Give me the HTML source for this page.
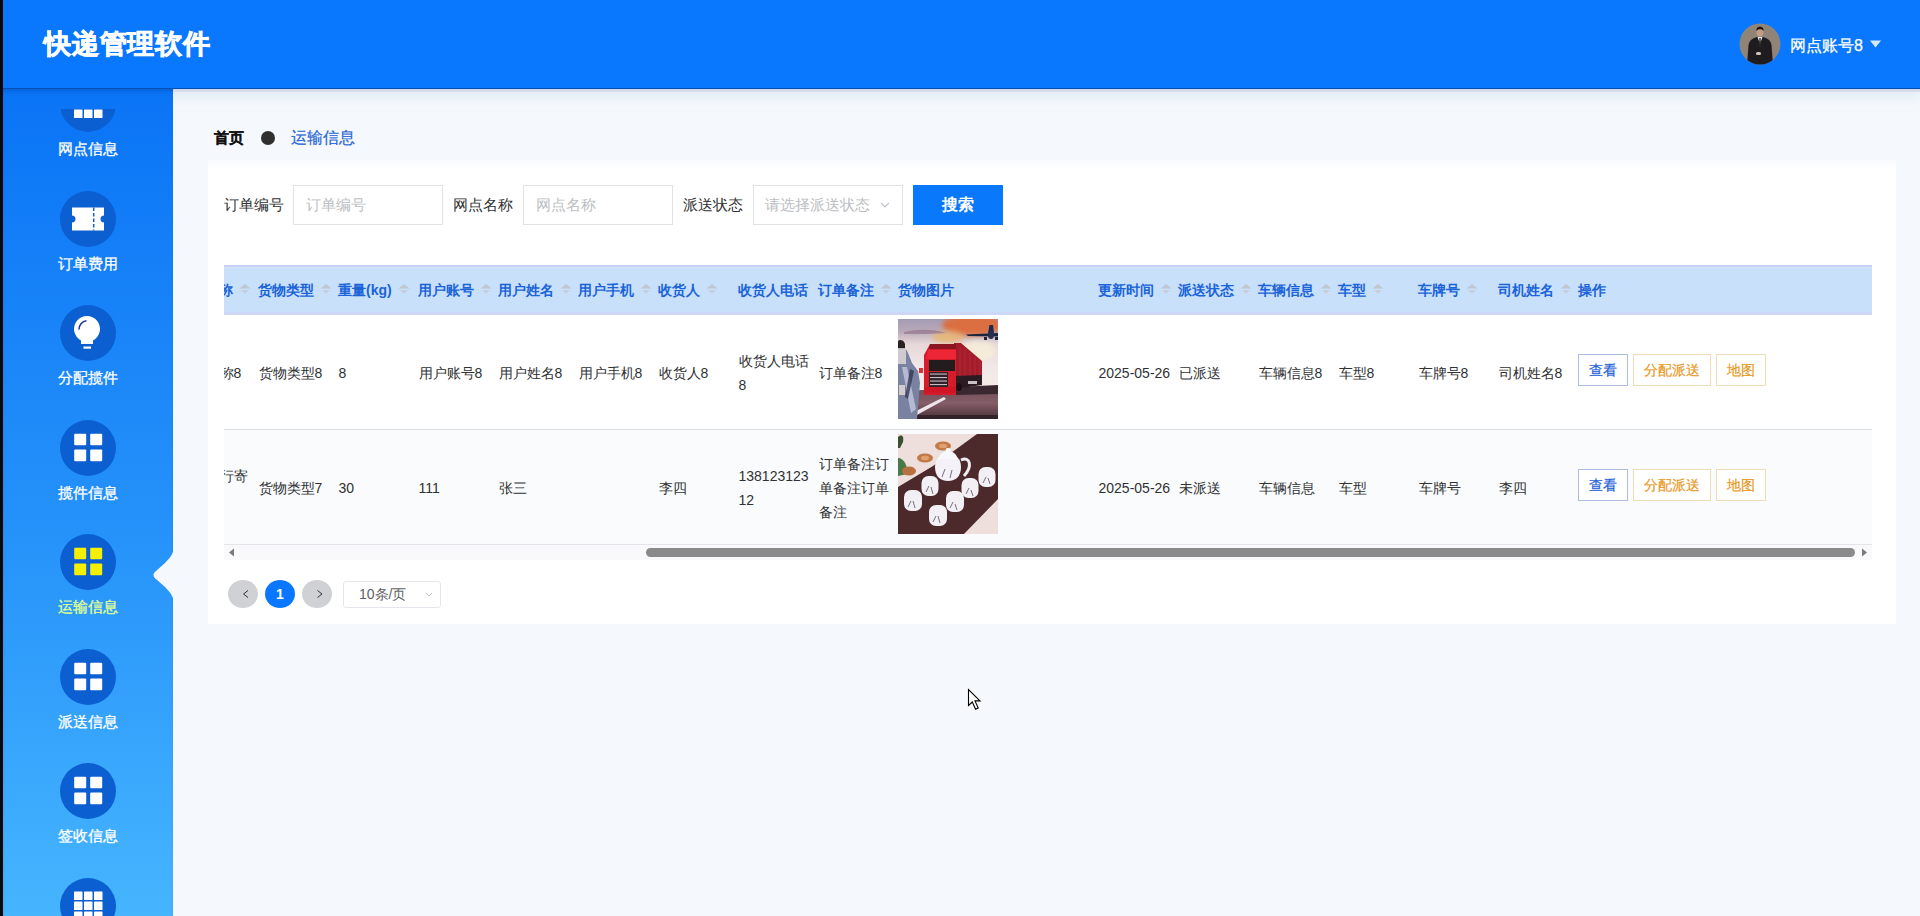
<!DOCTYPE html>
<html><head><meta charset="utf-8">
<style>
*{box-sizing:border-box;margin:0;padding:0}
html,body{width:1920px;height:916px;overflow:hidden}
body{position:relative;background:#f5f8fd;font-family:"Liberation Sans",sans-serif;color:#303133;font-size:14px}
.abs{position:absolute;white-space:nowrap}
#strip{position:absolute;left:0;top:0;width:3px;height:916px;background:#020a0c;z-index:20}
#header{position:absolute;left:0;top:0;width:1920px;height:89px;background:#0a78fe;z-index:10;border-bottom:1px solid #0b4fae;box-shadow:0 1px 0 #c8daf4,0 3px 0 #d6dde8,0 4px 0 #f0ebf6,0 8px 10px rgba(200,230,235,.5)}
#title{left:44px;top:26.5px;font-size:27px;letter-spacing:0.8px;font-weight:bold;color:#fff;line-height:34px;-webkit-text-stroke:0.7px #fff}
#sidebar{position:absolute;z-index:11;left:3px;top:89px;width:170px;height:827px;box-shadow:inset 0 4px 4px -2px rgba(0,60,160,.35);background:linear-gradient(180deg,#0a74f6 0%,#2693fa 55%,#46b5fe 100%);overflow:hidden}
.item{position:absolute;left:0;width:170px;height:114px}
.circ{position:absolute;left:57px;width:56px;height:56px;border-radius:50%;background:#0c5fd0}
.lab{position:absolute;left:0;width:170px;text-align:center;color:#fff;font-size:15px;font-weight:400;line-height:16px;-webkit-text-stroke:0.3px currentColor}
#card{position:absolute;left:208px;top:159px;width:1688px;height:465px;background:linear-gradient(180deg,#f7fafd 0px,#fdfeff 8px,#fff 14px)}
.lbl{font-size:15px;color:#303133;line-height:16px}
.inp{position:absolute;height:40px;border:1px solid #e0e2e6;background:#fff}
.ph{font-size:15px;color:#bcbec2;line-height:16px}
.th{font-size:14px;font-weight:bold;color:#1b64d8;line-height:16px}
.td{font-size:14px;color:#303133;line-height:16px}
.btn{position:absolute;height:32px;border:1px solid;font-size:14px;line-height:30px;text-align:center;-webkit-text-stroke:0.2px currentColor}
</style></head><body>
<div id="strip"></div>
<div id="header">
  <div class="abs" id="title">快递管理软件</div><svg class="abs" style="left:1739px;top:23px" width="42" height="42" viewBox="0 0 42 42">
<defs><clipPath id="avc"><circle cx="21" cy="21" r="20.5"/></clipPath></defs>
<g clip-path="url(#avc)">
<rect width="42" height="42" fill="#908478"/>
<path d="M8 42 L9.5 22 C10.5 17 14 15 18 14 L24 14 C28 15 31.5 17 32.5 22 L34 42Z" fill="#1e1c1e"/>
<path d="M18.5 14 L21 21 L23.5 14Z" fill="#e6e2de"/>
<path d="M20.4 15 L21.6 15 L22 23 L21 25 L20 23Z" fill="#2a2a2a"/>
<ellipse cx="21" cy="9" rx="3.6" ry="4.6" fill="#c49c84"/>
<path d="M17.4 8 C17.5 4.5 19 3.8 21 3.8 C23 3.8 24.5 4.5 24.6 8 C23.5 6.5 22 6.2 21 6.2 C20 6.2 18.5 6.5 17.4 8Z" fill="#1a1410"/>
<rect x="17" y="29" width="5" height="3" rx="1.5" fill="#d8c0b0"/>
</g></svg><div class="abs" style="left:1790px;top:35.5px;font-size:16px;line-height:20px;color:#fff;-webkit-text-stroke:0.25px #fff">网点账号8</div><svg class="abs" style="left:1870px;top:40px" width="11" height="8"><path d="M0 0.5h11L5.5 7.5z" fill="#d5e9ff"/></svg>
</div>
<div id="sidebar"><div id="sbclip" style="position:absolute;left:0;top:20px;width:170px;height:807px;overflow:hidden"><div class="circ" style="top:-33.5px"><svg width="56" height="56" style="position:absolute;left:0;top:0"><g fill="#fff"><rect x="14" y="13.5" width="8.5" height="8.5" rx="0.5"/><rect x="24" y="13.5" width="8.5" height="8.5" rx="0.5"/><rect x="34" y="13.5" width="8.5" height="8.5" rx="0.5"/><rect x="14" y="23.5" width="8.5" height="8.5" rx="0.5"/><rect x="24" y="23.5" width="8.5" height="8.5" rx="0.5"/><rect x="34" y="23.5" width="8.5" height="8.5" rx="0.5"/><rect x="14" y="33.5" width="8.5" height="8.5" rx="0.5"/><rect x="24" y="33.5" width="8.5" height="8.5" rx="0.5"/><rect x="34" y="33.5" width="8.5" height="8.5" rx="0.5"/></g></svg></div><div class="lab" style="top:31.5px;color:#fff">网点信息</div><div class="circ" style="top:81.5px"><svg width="56" height="56" style="position:absolute;left:0;top:0"><path fill="#fff" d="M12 16.5h32v8a3.5 3.5 0 0 0 0 7v8h-32v-8a3.5 3.5 0 0 0 0-7z"/><path stroke="#0c5fd0" stroke-width="1.5" stroke-dasharray="3.5 2" d="M33.7 16.5v23"/></svg></div><div class="lab" style="top:146.5px;color:#fff">订单费用</div><div class="circ" style="top:196.0px"><svg width="56" height="56" style="position:absolute;left:0;top:0"><path fill="#fff" d="M21 35.5A13 13 0 1 1 33 35.5L33 39L21 39Z"/><rect x="23.5" y="41.5" width="7.5" height="2.2" fill="#fff"/><path d="M19 24.5A8.5 8.5 0 0 1 26.5 15.8" fill="none" stroke="#1838a8" stroke-width="1.6"/></svg></div><div class="lab" style="top:261.0px;color:#fff">分配揽件</div><div class="circ" style="top:310.5px"><svg width="56" height="56" style="position:absolute;left:0;top:0"><g fill="#fff"><rect x="14.2" y="13.7" width="12" height="11.6" rx="1"/><rect x="30.2" y="13.7" width="12" height="11.6" rx="1"/><rect x="14.2" y="29.6" width="12" height="11.6" rx="1"/><rect x="30.2" y="29.6" width="12" height="11.6" rx="1"/></g></svg></div><div class="lab" style="top:375.5px;color:#fff">揽件信息</div><div class="circ" style="top:425.0px"><svg width="56" height="56" style="position:absolute;left:0;top:0"><g fill="#f5f000"><rect x="14.2" y="13.7" width="12" height="11.6" rx="1"/><rect x="30.2" y="13.7" width="12" height="11.6" rx="1"/><rect x="14.2" y="29.6" width="12" height="11.6" rx="1"/><rect x="30.2" y="29.6" width="12" height="11.6" rx="1"/></g></svg></div><div class="lab" style="top:490.0px;color:#e0ff90">运输信息</div><div class="circ" style="top:539.5px"><svg width="56" height="56" style="position:absolute;left:0;top:0"><g fill="#fff"><rect x="14.2" y="13.7" width="12" height="11.6" rx="1"/><rect x="30.2" y="13.7" width="12" height="11.6" rx="1"/><rect x="14.2" y="29.6" width="12" height="11.6" rx="1"/><rect x="30.2" y="29.6" width="12" height="11.6" rx="1"/></g></svg></div><div class="lab" style="top:604.5px;color:#fff">派送信息</div><div class="circ" style="top:654.0px"><svg width="56" height="56" style="position:absolute;left:0;top:0"><g fill="#fff"><rect x="14.2" y="13.7" width="12" height="11.6" rx="1"/><rect x="30.2" y="13.7" width="12" height="11.6" rx="1"/><rect x="14.2" y="29.6" width="12" height="11.6" rx="1"/><rect x="30.2" y="29.6" width="12" height="11.6" rx="1"/></g></svg></div><div class="lab" style="top:719.0px;color:#fff">签收信息</div><div class="circ" style="top:768.5px"><svg width="56" height="56" style="position:absolute;left:0;top:0"><g fill="#fff"><rect x="14" y="13.5" width="8.5" height="8.5" rx="0.5"/><rect x="24" y="13.5" width="8.5" height="8.5" rx="0.5"/><rect x="34" y="13.5" width="8.5" height="8.5" rx="0.5"/><rect x="14" y="23.5" width="8.5" height="8.5" rx="0.5"/><rect x="24" y="23.5" width="8.5" height="8.5" rx="0.5"/><rect x="34" y="23.5" width="8.5" height="8.5" rx="0.5"/><rect x="14" y="33.5" width="8.5" height="8.5" rx="0.5"/><rect x="24" y="33.5" width="8.5" height="8.5" rx="0.5"/><rect x="34" y="33.5" width="8.5" height="8.5" rx="0.5"/></g></svg></div></div></div><svg class="abs" style="left:150px;top:547px;z-index:12" width="24" height="56" viewBox="0 0 24 56"><path fill="#f5f8fd" d="M24 0 C23.5 6 21 10 15 16 L6.5 23.5 C2.5 26.5 2.5 29.5 6.5 32.5 L15 40 C21 46 23.5 50 24 56 Z"/></svg>
<div id="main"><div class="abs" style="left:214px;top:128.5px;font-size:15px;font-weight:bold;line-height:18px;color:#111;-webkit-text-stroke:0.2px #111">首页</div><div class="abs" style="left:261px;top:131px;width:14px;height:14px;border-radius:50%;background:#303030"></div><div class="abs" style="left:290.5px;top:128px;font-size:15.5px;line-height:20px;color:#2866d4;-webkit-text-stroke:0.2px #2866d4">运输信息</div><div id="card"></div><div class="abs lbl" style="left:224px;top:197px">订单编号</div><div class="inp" style="left:293px;top:185px;width:150px"></div><div class="abs ph" style="left:306px;top:197px">订单编号</div><div class="abs lbl" style="left:453px;top:197px">网点名称</div><div class="inp" style="left:523px;top:185px;width:150px"></div><div class="abs ph" style="left:536px;top:197px">网点名称</div><div class="abs lbl" style="left:683px;top:197px">派送状态</div><div class="inp" style="left:753px;top:185px;width:150px"></div><div class="abs ph" style="left:764.5px;top:197px">请选择派送状态</div><svg class="abs" style="left:880px;top:201px" width="10" height="8"><path d="M1 2l4 4 4-4" fill="none" stroke="#c0c4cc" stroke-width="1.2"/></svg><div class="abs" style="left:913px;top:185px;width:90px;height:40px;background:#0a78fa;color:#fff;font-size:16px;font-weight:bold;line-height:39px;text-align:center">搜索</div><div class="abs" style="left:224px;top:265px;width:1648px;height:50px;background:#c8e0fa;border-top:2px solid #c6d2f4;border-bottom:3px solid #ccd8f6;box-shadow:inset 0 1px 0 #d6e2fa"></div><div class="abs" style="left:224px;top:430px;width:1648px;height:114px;background:#fafbfd"></div><div class="abs" style="left:224px;top:429px;width:1648px;height:1px;background:#dfe0e2"></div><div class="abs" style="left:224px;top:544px;width:1648px;height:1px;background:#e4e5e8"></div><div class="abs" style="left:224px;top:545px;width:1648px;height:15px;background:#f9f9fb"></div><svg class="abs" style="left:228px;top:548px" width="8" height="9"><path d="M6 0.5v8L1 4.5z" fill="#7a7a7a"/></svg><svg class="abs" style="left:1860px;top:548px" width="8" height="9"><path d="M2 0.5v8L7 4.5z" fill="#7a7a7a"/></svg><div class="abs" style="left:646px;top:548px;width:1209px;height:9px;border-radius:5px;background:#8a8a8a"></div><div class="abs" style="left:224px;top:265px;width:1648px;height:280px;overflow:hidden"><div class="abs th" style="left:-5px;top:17px">称</div><div class="abs th" style="left:34px;top:17px">货物类型</div><div class="abs th" style="left:114px;top:17px">重量(kg)</div><div class="abs th" style="left:194px;top:17px">用户账号</div><div class="abs th" style="left:274px;top:17px">用户姓名</div><div class="abs th" style="left:354px;top:17px">用户手机</div><div class="abs th" style="left:434px;top:17px">收货人</div><div class="abs th" style="left:514px;top:17px">收货人电话</div><div class="abs th" style="left:594px;top:17px">订单备注</div><div class="abs th" style="left:674px;top:17px">货物图片</div><div class="abs th" style="left:874px;top:17px">更新时间</div><div class="abs th" style="left:954px;top:17px">派送状态</div><div class="abs th" style="left:1034px;top:17px">车辆信息</div><div class="abs th" style="left:1114px;top:17px">车型</div><div class="abs th" style="left:1194px;top:17px">车牌号</div><div class="abs th" style="left:1274px;top:17px">司机姓名</div><div class="abs th" style="left:1354px;top:17px">操作</div><svg class="abs" style="left:15px;top:18px" width="12" height="12"><path d="M0.5 5.5L6 1 11.5 5.5z" fill="#bec6d2"/><path d="M2 7.2L6 10.5 10 7.2z" fill="#c6cdd8"/></svg><svg class="abs" style="left:96px;top:18px" width="12" height="12"><path d="M0.5 5.5L6 1 11.5 5.5z" fill="#bec6d2"/><path d="M2 7.2L6 10.5 10 7.2z" fill="#c6cdd8"/></svg><svg class="abs" style="left:174px;top:18px" width="12" height="12"><path d="M0.5 5.5L6 1 11.5 5.5z" fill="#bec6d2"/><path d="M2 7.2L6 10.5 10 7.2z" fill="#c6cdd8"/></svg><svg class="abs" style="left:256px;top:18px" width="12" height="12"><path d="M0.5 5.5L6 1 11.5 5.5z" fill="#bec6d2"/><path d="M2 7.2L6 10.5 10 7.2z" fill="#c6cdd8"/></svg><svg class="abs" style="left:336px;top:18px" width="12" height="12"><path d="M0.5 5.5L6 1 11.5 5.5z" fill="#bec6d2"/><path d="M2 7.2L6 10.5 10 7.2z" fill="#c6cdd8"/></svg><svg class="abs" style="left:416px;top:18px" width="12" height="12"><path d="M0.5 5.5L6 1 11.5 5.5z" fill="#bec6d2"/><path d="M2 7.2L6 10.5 10 7.2z" fill="#c6cdd8"/></svg><svg class="abs" style="left:482px;top:18px" width="12" height="12"><path d="M0.5 5.5L6 1 11.5 5.5z" fill="#bec6d2"/><path d="M2 7.2L6 10.5 10 7.2z" fill="#c6cdd8"/></svg><svg class="abs" style="left:656px;top:18px" width="12" height="12"><path d="M0.5 5.5L6 1 11.5 5.5z" fill="#bec6d2"/><path d="M2 7.2L6 10.5 10 7.2z" fill="#c6cdd8"/></svg><svg class="abs" style="left:936px;top:18px" width="12" height="12"><path d="M0.5 5.5L6 1 11.5 5.5z" fill="#bec6d2"/><path d="M2 7.2L6 10.5 10 7.2z" fill="#c6cdd8"/></svg><svg class="abs" style="left:1016px;top:18px" width="12" height="12"><path d="M0.5 5.5L6 1 11.5 5.5z" fill="#bec6d2"/><path d="M2 7.2L6 10.5 10 7.2z" fill="#c6cdd8"/></svg><svg class="abs" style="left:1096px;top:18px" width="12" height="12"><path d="M0.5 5.5L6 1 11.5 5.5z" fill="#bec6d2"/><path d="M2 7.2L6 10.5 10 7.2z" fill="#c6cdd8"/></svg><svg class="abs" style="left:1148px;top:18px" width="12" height="12"><path d="M0.5 5.5L6 1 11.5 5.5z" fill="#bec6d2"/><path d="M2 7.2L6 10.5 10 7.2z" fill="#c6cdd8"/></svg><svg class="abs" style="left:1242px;top:18px" width="12" height="12"><path d="M0.5 5.5L6 1 11.5 5.5z" fill="#bec6d2"/><path d="M2 7.2L6 10.5 10 7.2z" fill="#c6cdd8"/></svg><svg class="abs" style="left:1336px;top:18px" width="12" height="12"><path d="M0.5 5.5L6 1 11.5 5.5z" fill="#bec6d2"/><path d="M2 7.2L6 10.5 10 7.2z" fill="#c6cdd8"/></svg><div class="abs td" style="left:-4.5px;top:100px">称8</div><div class="abs td" style="left:34.5px;top:100px">货物类型8</div><div class="abs td" style="left:114.5px;top:100px">8</div><div class="abs td" style="left:194.5px;top:100px">用户账号8</div><div class="abs td" style="left:274.5px;top:100px">用户姓名8</div><div class="abs td" style="left:354.5px;top:100px">用户手机8</div><div class="abs td" style="left:434.5px;top:100px">收货人8</div><div class="abs td" style="left:514.5px;top:88px">收货人电话</div><div class="abs td" style="left:514.5px;top:112px">8</div><div class="abs td" style="left:594.5px;top:100px">订单备注8</div><div class="abs td" style="left:874.5px;top:100px">2025-05-26</div><div class="abs td" style="left:954.5px;top:100px">已派送</div><div class="abs td" style="left:1034.5px;top:100px">车辆信息8</div><div class="abs td" style="left:1114.5px;top:100px">车型8</div><div class="abs td" style="left:1194.5px;top:100px">车牌号8</div><div class="abs td" style="left:1274.5px;top:100px">司机姓名8</div><div class="abs td" style="left:-4.5px;top:203px">行寄</div><div class="abs td" style="left:34.5px;top:215px">货物类型7</div><div class="abs td" style="left:114.5px;top:215px">30</div><div class="abs td" style="left:194.5px;top:215px">111</div><div class="abs td" style="left:274.5px;top:215px">张三</div><div class="abs td" style="left:434.5px;top:215px">李四</div><div class="abs td" style="left:514.5px;top:203px">138123123</div><div class="abs td" style="left:514.5px;top:227px">12</div><div class="abs td" style="left:594.5px;top:191px">订单备注订</div><div class="abs td" style="left:594.5px;top:215px">单备注订单</div><div class="abs td" style="left:594.5px;top:239px">备注</div><div class="abs td" style="left:874.5px;top:215px">2025-05-26</div><div class="abs td" style="left:954.5px;top:215px">未派送</div><div class="abs td" style="left:1034.5px;top:215px">车辆信息</div><div class="abs td" style="left:1114.5px;top:215px">车型</div><div class="abs td" style="left:1194.5px;top:215px">车牌号</div><div class="abs td" style="left:1274.5px;top:215px">李四</div><div class="btn" style="left:1354px;top:89px;width:50px;color:#1e62d6;border-color:#aebce0;background:#fff">查看</div><div class="btn" style="left:1409px;top:89px;width:78px;color:#e8981e;border-color:#f0dcb8;background:#fff">分配派送</div><div class="btn" style="left:1492px;top:89px;width:50px;color:#e8981e;border-color:#f0dcb8;background:#fff">地图</div><div class="btn" style="left:1354px;top:204px;width:50px;color:#1e62d6;border-color:#aebce0;background:#fff">查看</div><div class="btn" style="left:1409px;top:204px;width:78px;color:#e8981e;border-color:#f0dcb8;background:#fff">分配派送</div><div class="btn" style="left:1492px;top:204px;width:50px;color:#e8981e;border-color:#f0dcb8;background:#fff">地图</div><div class="abs" id="img1" style="left:674px;top:54px;width:100px;height:100px;overflow:hidden"><svg width="100" height="100" viewBox="0 0 100 100" style="position:absolute;left:0;top:0;display:block">
<defs>
<linearGradient id="sky" x1="0" y1="0" x2="0" y2="1"><stop offset="0" stop-color="#a49cb4"/><stop offset="0.12" stop-color="#b8a8b8"/><stop offset="0.25" stop-color="#e6d8d8"/><stop offset="0.5" stop-color="#f2e8ea"/><stop offset="0.7" stop-color="#f4ece8"/></linearGradient>
<linearGradient id="road" x1="0" y1="0" x2="0" y2="1"><stop offset="0" stop-color="#6e4c56"/><stop offset="0.5" stop-color="#845e68"/><stop offset="1" stop-color="#4a3038"/></linearGradient>
<filter id="bl" x="-30%" y="-30%" width="160%" height="160%"><feGaussianBlur stdDeviation="2.5"/></filter>
<filter id="bl2" x="-30%" y="-30%" width="160%" height="160%"><feGaussianBlur stdDeviation="0.6"/></filter>
</defs>
<rect width="100" height="100" fill="url(#sky)"/>
<ellipse cx="74" cy="6" rx="30" ry="11" fill="#e06a34" opacity="0.9" filter="url(#bl)"/>
<ellipse cx="50" cy="18" rx="16" ry="6" fill="#ecb46c" opacity="0.8" filter="url(#bl)"/>
<ellipse cx="80" cy="32" rx="18" ry="10" fill="#f6eed8" opacity="0.9" filter="url(#bl)"/>
<path d="M6 13 C20 10 36 10 48 14 C36 15 20 15 6 15Z" fill="#8c6c84" opacity="0.6" filter="url(#bl2)"/>
<path d="M0 72 L100 68 L100 100 L0 100Z" fill="url(#road)"/>
<path d="M58 68 L100 66 L100 75 L58 76Z" fill="#3a2830"/>
<path d="M14 94 L46 78 L48 80 L17 97Z" fill="#eee4ea"/>
<rect x="0" y="96" width="100" height="4" fill="#34222a"/>
<g filter="url(#bl2)">
<path d="M56 24 L63 24 L84 42 L84 57 L56 62Z" fill="#a41c2c"/>
<path d="M62 28 L62 60 M67 30 L67 59 M72 34 L72 58 M77 38 L77 58 M82 41 L82 57" stroke="#c03848" stroke-width="0.8" opacity="0.6"/>
<path d="M56 57 L84 56 L84 66 L56 70Z" fill="#2a1a20"/>
<rect x="70" y="62" width="9" height="3" fill="#e8e0e4" opacity="0.85"/>
<ellipse cx="61" cy="68" rx="3" ry="4" fill="#1a1014"/>
<path d="M32 25 L58 25 L58 76 L26 76 L26 36Z" fill="#d41a2a"/>
<path d="M32 25 L58 25 L58 30 L31 30Z" fill="#8a1420"/>
<path d="M30 31 L58 31 L58 40 L28 40Z" fill="#ec2834"/>
<path d="M31 41 L57 41 L57 52 L31 52Z" fill="#221a1e"/>
<path d="M31 53 L50 53 L50 69 L31 69Z" fill="#2e2228"/>
<rect x="32" y="54.5" width="17" height="1.1" fill="#c8bcc4"/><rect x="32" y="58" width="17" height="1.1" fill="#c8bcc4"/><rect x="32" y="61.5" width="17" height="1.1" fill="#c8bcc4"/><rect x="32" y="65" width="17" height="1.1" fill="#c8bcc4"/>
<path d="M26 68 L58 68 L58 74 L26 74Z" fill="#d01828"/>
<path d="M0 30 C3 26 8 28 10 34 L14 44 L20 52 L22 64 L19 100 L0 100Z" fill="#7a82a2"/>
<path d="M4 48 L9 48 L18 90 L13 94Z" fill="#c8cce0" opacity="0.75"/>
<path d="M12 50 L16 52 L10 80 L7 78Z" fill="#2a2e4a" opacity="0.7"/>
<rect x="1" y="66" width="6" height="10" fill="#e8e0d8" opacity="0.8"/>
<path d="M0 22 C2 20 6 21 7 25 L7 30 L0 30Z" fill="#2a2022"/>
<rect x="0" y="29" width="8" height="16" fill="#e4dcdc" opacity="0.8"/>
<path d="M21 49 L25 49 L25 54 L21 54Z" fill="#d83030"/>
</g>
<path d="M68 15.5 L100 14 L100 17.5 L70 17Z" fill="#1c2440"/>
<path d="M90 14 L91.5 6 L95 6 L96 14Z" fill="#1e2a48"/>
<ellipse cx="93" cy="16" rx="3" ry="4" fill="#26304e"/>
<rect x="86" y="18" width="3" height="3" fill="#1c2440"/><rect x="97" y="18" width="3" height="3" fill="#1c2440"/>
</svg></div><div class="abs" id="img2" style="left:674px;top:169px;width:100px;height:100px;overflow:hidden"><svg width="100" height="100" viewBox="0 0 100 100" style="position:absolute;left:0;top:0;display:block">
<rect width="100" height="100" fill="#eedfdc"/>
<path d="M0 53 L35 32 L79 0 L100 0 L100 65 L66 100 L0 100Z" fill="#4c2a2c"/>
<path d="M0 3 C4 0 6 2 5 8 L2 14 L0 14Z" fill="#3a5030"/>
<path d="M0 24 C6 24 10 32 9 40 L0 42Z" fill="#4a7a48"/>
<ellipse cx="45" cy="12" rx="8" ry="4.5" fill="#c07a48"/><ellipse cx="45" cy="12" rx="4" ry="2.2" fill="#e0a070"/>
<ellipse cx="27" cy="24" rx="8" ry="4.5" fill="#c07a48"/><ellipse cx="27" cy="24" rx="4" ry="2.2" fill="#e0a070"/>
<ellipse cx="11" cy="37" rx="7" ry="4.5" fill="#b87040"/>
<path d="M63 26 C72 22 75 32 66 42" fill="none" stroke="#f0eef4" stroke-width="3"/>
<path d="M37 33 C37 24 42 21 50 21 C58 21 63 24 63 33 C63 42 58 47 50 47 C42 47 37 42 37 33Z" fill="#f4f2f8"/>
<path d="M40 25 C42 19 46 17 50 17 C54 17 58 19 60 25Z" fill="#f8f8fc"/>
<ellipse cx="50" cy="16" rx="2.5" ry="2" fill="#fff"/>
<g fill="#f2f0f4"><rect x="23.5" y="42" width="17" height="20" rx="7"/><rect x="63.5" y="44" width="17" height="20" rx="7"/><rect x="80.5" y="33" width="17" height="20" rx="7"/><rect x="6" y="56" width="18" height="21" rx="7"/><rect x="48" y="57" width="18" height="21" rx="7"/><rect x="31" y="71" width="18" height="21" rx="7"/></g>
<g stroke="#3a3040" stroke-width="0.9" opacity="0.75"><path d="M28 58l3-6M35 60l-2-7M68 60l3-6M75 62l-2-6M85 49l3-6M92 50l-2-6M10 73l3-6M17 74l-2-7M52 74l3-6M59 76l-2-6M35 88l3-6M42 89l-2-7M44 43l3-8M52 44l2-8"/></g>
</svg></div></div><div class="abs" style="left:228px;top:580px;width:30px;height:28px;border-radius:50%;background:#cfd1d4"></div><svg class="abs" style="left:242px;top:589px" width="8" height="10"><path d="M6 1.5L1.5 5 6 8.5" fill="none" stroke="#303133" stroke-width="1"/></svg><div class="abs" style="left:265px;top:580px;width:30px;height:28px;border-radius:50%;background:#0a78fe;color:#fff;font-weight:bold;font-size:14px;line-height:28px;text-align:center">1</div><div class="abs" style="left:302px;top:580px;width:30px;height:28px;border-radius:50%;background:#cfd1d4"></div><svg class="abs" style="left:316px;top:589px" width="8" height="10"><path d="M1.5 1.5L6 5 1.5 8.5" fill="none" stroke="#303133" stroke-width="1"/></svg><div class="abs" style="left:343px;top:581px;width:98px;height:27px;border:1px solid #e4e7ed;border-radius:3px;background:#fff"></div><div class="abs" style="left:359px;top:586px;font-size:14px;line-height:16px;color:#606266">10条/页</div><svg class="abs" style="left:425px;top:592px" width="8" height="6"><path d="M1 1l3 3 3-3" fill="none" stroke="#c0c4cc" stroke-width="1"/></svg></div>
<svg class="abs" style="left:967px;top:688px;z-index:30" width="16" height="24" viewBox="0 0 16 24"><path d="M1.5 1.5 L1.5 17.5 L5.3 14 L8.6 21.3 L11.2 20.1 L8 12.9 L13 12.9 Z" fill="#fff" stroke="#000" stroke-width="1.1" stroke-linejoin="miter"/></svg></body></html>
